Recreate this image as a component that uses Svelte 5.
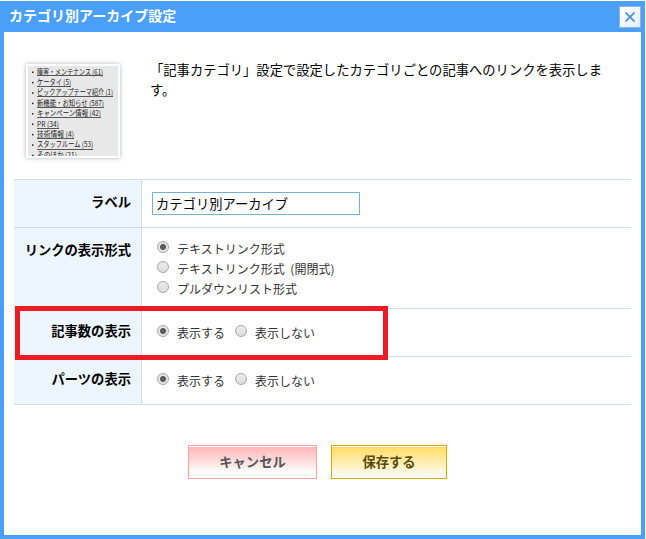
<script lang="ts">
  interface Option {
    value: string;
    text: string;
  }

  interface Setting {
    name: string;
    label: string;
    stacked: boolean;
    marked: boolean;
    options: Option[];
  }

  const visibility: Option[] = [
    { value: 'show', text: '表示する' },
    { value: 'hide', text: '表示しない' }
  ];

  const settings: Setting[] = [
    {
      name: 'format',
      label: 'リンクの表示形式',
      stacked: true,
      marked: false,
      options: [
        { value: 'text', text: 'テキストリンク形式' },
        { value: 'toggle', text: 'テキストリンク形式 (開閉式)' },
        { value: 'pulldown', text: 'プルダウンリスト形式' }
      ]
    },
    { name: 'count', label: '記事数の表示', stacked: false, marked: true, options: visibility },
    { name: 'parts', label: 'パーツの表示', stacked: false, marked: false, options: visibility }
  ];

  // sample list in the thumbnail, with the drawn width of each line
  const samples = [
    { text: '障害・メンテナンス (61)', width: 66 },
    { text: 'ケータイ (5)', width: 34 },
    { text: 'ピックアップテーマ紹介 (1)', width: 76 },
    { text: '新機能・お知らせ (587)', width: 67 },
    { text: 'キャンペーン情報 (42)', width: 64 },
    { text: 'PR (34)', width: 22 },
    { text: '技術情報 (4)', width: 37 },
    { text: 'スタッフルーム (53)', width: 56 },
    { text: 'そのほか (21)', width: 40 }
  ];

  let title = $state('カテゴリ別アーカイブ');
  let selected = $state<Record<string, string>>({ format: 'text', count: 'show', parts: 'show' });
</script>

<div class="dialog">
  <header class="header">
    <h1>カテゴリ別アーカイブ設定</h1>
    <button class="close" type="button" aria-label="閉じる">
      <svg width="10" height="10" viewBox="0 0 10 10">
        <path d="M0.5 0.5 L9.5 9.5 M9.5 0.5 L0.5 9.5" />
      </svg>
    </button>
  </header>

  <div class="content">
    <div class="intro">
      <div class="thumb">
        <svg width="90" height="90" viewBox="0 0 90 90">
          {#each samples as s, i}
            <rect x="4" y={5.5 + i * 10.4} width="1.5" height="1.5" />
            <text x="9" y={8.6 + i * 10.4} textLength={s.width} lengthAdjust="spacingAndGlyphs">{s.text}</text>
            <rect x="9" y={Math.round(9.4 + i * 10.5)} width={s.width} height="1" class="underline" />
          {/each}
        </svg>
      </div>
      <p>「記事カテゴリ」設定で設定したカテゴリごとの記事へのリンクを表示します。</p>
    </div>

    <form onsubmit={(e) => e.preventDefault()}>
      <div class="rows">
        <div class="row">
          <div class="label">ラベル</div>
          <div class="field">
            <input class="text" type="text" bind:value={title} />
          </div>
        </div>
        {#each settings as s}
          <div class="row" class:tall={s.stacked}>
            <div class="label">{s.label}</div>
            <div class="field options" class:stacked={s.stacked}>
              {#each s.options as o}
                <label>
                  <input type="radio" name={s.name} value={o.value} bind:group={selected[s.name]} />
                  <span>{o.text}</span>
                </label>
              {/each}
            </div>
            {#if s.marked}
              <div class="marker"></div>
            {/if}
          </div>
        {/each}
      </div>

      <div class="actions">
        <button class="cancel" type="button">キャンセル</button>
        <button class="save" type="submit">保存する</button>
      </div>
    </form>
  </div>
</div>

<style>
  :global(body) {
    margin: 0;
    background: #fff;
    overflow: hidden;
  }
  .dialog {
    box-sizing: border-box;
    width: 645px;
    height: 538px;
    margin-top: 1px;
    border: 4px solid #4a9ff8;
    border-top: none;
    background: #fff;
    color: #000;
    font-family: 'Noto Sans CJK JP', sans-serif;
    font-size: 13.3px;
  }
  .header {
    display: flex;
    align-items: center;
    justify-content: space-between;
    height: 31px;
    padding: 0 0 0 5px;
    background: #4a9ff8;
  }
  .header h1 {
    margin: 0;
    color: #fff;
    font-size: 14px;
    font-weight: 700;
    line-height: 29px;
    height: 31px;
  }
  .close {
    display: flex;
    align-items: center;
    justify-content: center;
    box-sizing: border-box;
    width: 22px;
    height: 22px;
    padding: 0;
    border: 1px solid #92b4d8;
    background: linear-gradient(135deg, #fff, #e2edf9);
  }
  .close svg { stroke: #4a8fdc; stroke-width: 1.7; fill: none; }
  .content { padding: 32px 10px 0; }
  .intro {
    display: flex;
    height: 115px;
    padding-left: 12px;
  }
  .thumb {
    box-sizing: border-box;
    flex: none;
    width: 94px;
    height: 94px;
    border: 2px solid #fff;
    background: #e8e8e8;
    box-shadow: 0 0 4px rgba(80, 110, 130, 0.5);
  }
  .thumb svg { display: block; font-size: 8px; fill: #222; }
  .thumb .underline { fill: #555; }
  .intro p {
    width: 470px;
    margin: -4px 0 0 30px;
    line-height: 20px;
  }
  .rows { border-top: 1px solid #cddce9; }
  .row {
    position: relative;
    display: flex;
    height: 47px;
    border-bottom: 1px solid #cddce9;
  }
  .row.tall { height: 80px; }
  .label {
    box-sizing: border-box;
    flex: none;
    width: 128px;
    padding: 12px 10px 0 0;
    border-right: 1px solid #cddce9;
    background: #edf6fe;
    font-weight: 700;
    line-height: 20px;
    text-align: right;
  }
  .field { padding: 12px 10px; }
  .text {
    display: block;
    box-sizing: border-box;
    width: 208px;
    height: 23px;
    padding: 0 3px 1px;
    border: 1px solid #74b2d5;
    background: #fff;
    color: #000;
    font: inherit;
    outline: none;
  }
  .options {
    display: flex;
    gap: 10px;
    padding: 13px 14px 0 15px;
    color: #333;
    font-size: 12px;
    line-height: 20px;
    word-spacing: 3px;
  }
  .options.stacked {
    flex-direction: column;
    gap: 0;
    padding-top: 10px;
  }
  .options label { display: flex; }
  .options span { margin-top: 1px; height: 19px; }
  .options input {
    appearance: none;
    box-sizing: border-box;
    flex: none;
    width: 12px;
    height: 12px;
    margin: 3px 8px 0 0;
    border: 1px solid #a6a6a6;
    border-radius: 50%;
    background: linear-gradient(#ededed, #dcdcdc);
  }
  .options input:checked {
    background: radial-gradient(circle, #5c5c5c 2.6px, #e4e4e4 3.4px);
  }
  .marker {
    position: absolute;
    z-index: 1;
    top: -3px;
    left: 1px;
    box-sizing: border-box;
    width: 373px;
    height: 54px;
    border: 5px solid #ed1c24;
    pointer-events: none;
  }
  .actions {
    display: flex;
    gap: 14px;
    padding: 40px 0 0 174px;
  }
  .actions button {
    box-sizing: border-box;
    height: 34px;
    padding: 0 0 2px;
    font: inherit;
    font-weight: 700;
    box-shadow: inset 0 1px 0 #fff;
  }
  .cancel {
    width: 129px;
    border: 1px solid #fda0a1;
    background: linear-gradient(#ffb3b5, #fff 85%);
    color: #555;
  }
  .save {
    width: 116px;
    border: 1px solid #d6a800;
    background: linear-gradient(#ffdc60, #fffbee 90%);
    color: #5b4a05;
  }
</style>
